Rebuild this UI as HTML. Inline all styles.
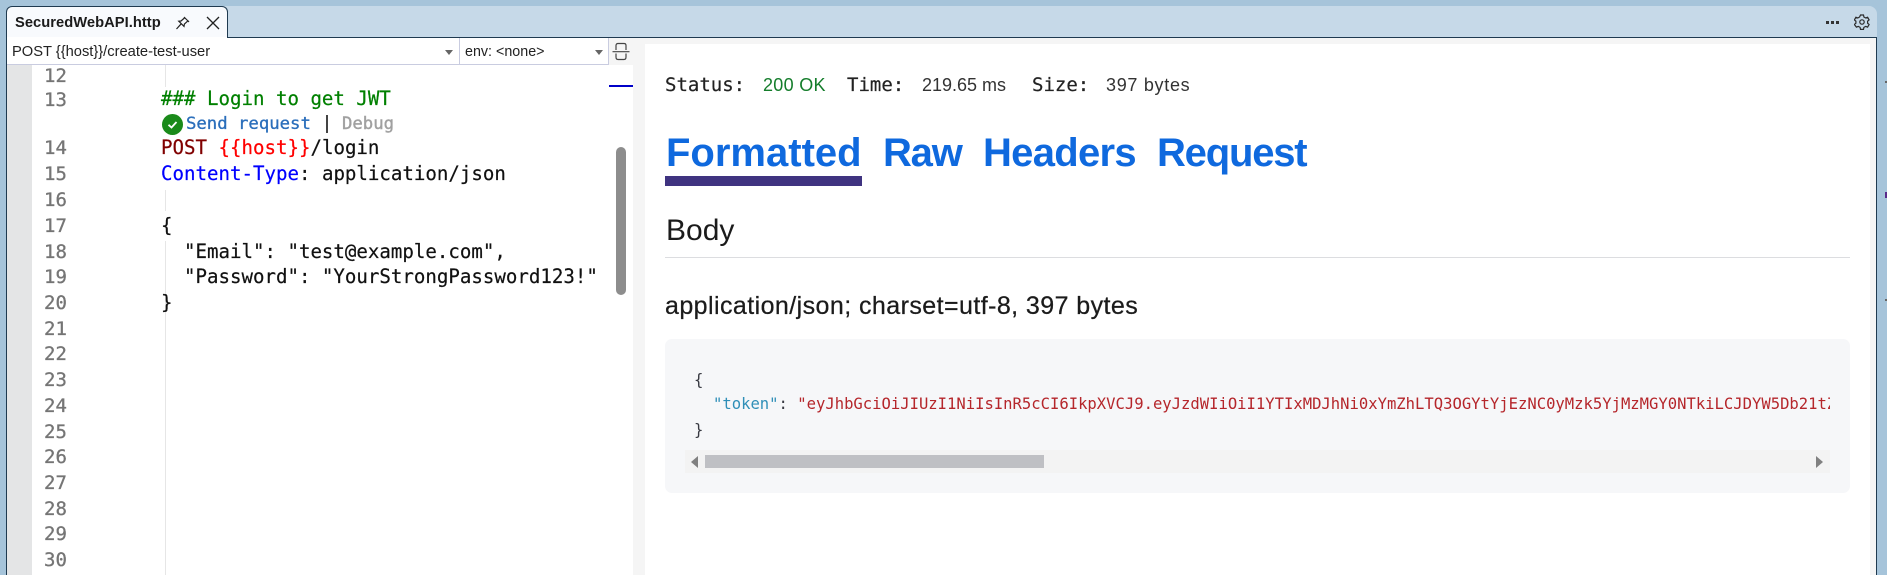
<!DOCTYPE html>
<html><head><meta charset="utf-8">
<style>
html,body{margin:0;padding:0;width:1887px;height:575px;overflow:hidden;background:#a6c4da}
*{box-sizing:border-box}
.a{position:absolute;white-space:pre}
.m{font-family:"DejaVu Sans Mono",monospace}
.s{font-family:"Liberation Sans",sans-serif}
.ln{position:absolute;left:44px;width:24px;font:19px/26px "DejaVu Sans Mono",monospace;color:#757575;-webkit-text-stroke:.3px #757575}
.cd{position:absolute;left:161px;font:19.100px/26px "DejaVu Sans Mono",monospace;color:#111;white-space:pre;-webkit-text-stroke:.2px currentColor}
.st{position:absolute;top:73px;font:19px/24px "DejaVu Sans Mono",monospace;color:#222;white-space:pre;-webkit-text-stroke:.2px #222}
.sv{position:absolute;top:73px;font:18px/24px "Liberation Sans",sans-serif;color:#333;white-space:pre}
.tb{position:absolute;top:129px;font:bold 40px/48px "Liberation Sans",sans-serif;color:#0f69de;white-space:pre}
.gd{position:absolute;left:165px;width:1px;background:#e6e6e6}
.jl{position:absolute;font:15.550px/25px "DejaVu Sans Mono",monospace;white-space:pre}
</style></head><body>
<!-- strip -->
<div class="a" style="left:6px;top:6px;width:1871px;height:32px;background:#c6d9e8;border-radius:8px 8px 0 0"></div>
<div class="a" style="left:6px;top:37px;width:1871px;height:538px;background:#f5f5f5;border-left:1px solid #1f3a50;border-right:1px solid #1f3a50;border-top:1px solid #1f3a50"></div>
<!-- tab -->
<div class="a" style="left:6px;top:6px;width:222px;height:33px;background:#f8fafd;border:1px solid #1f3a50;border-bottom:none;border-radius:6px 6px 0 0"></div>
<div class="a" style="left:7px;top:37px;width:220px;height:2px;background:#fff"></div>
<div class="a s" style="left:15px;top:13px;font-weight:bold;font-size:14.700px;letter-spacing:.04px;line-height:20px;color:#1b1b1b">SecuredWebAPI.http</div>
<svg class="a" style="left:174px;top:15px" width="18" height="16" viewBox="0 0 18 16" fill="none" stroke="#222" stroke-width="1.2"><path d="M10 2l5 5M11 2.500L7 6 4.800 6.200 10 11.400l.4-2.400 4-3.600M7.300 8.700L2.500 14"/></svg>
<svg class="a" style="left:206px;top:16px" width="14" height="14" viewBox="0 0 14 14" fill="none" stroke="#222" stroke-width="1.3"><path d="M1 1l12 12M13 1L1 13"/></svg>
<!-- top right -->
<div class="a" style="left:1826px;top:21px;width:3px;height:3px;background:#333"></div>
<div class="a" style="left:1831px;top:21px;width:3px;height:3px;background:#333"></div>
<div class="a" style="left:1836px;top:21px;width:3px;height:3px;background:#333"></div>
<svg class="a" style="left:1854px;top:14px" width="16" height="16" viewBox="0 0 16 16" fill="none" stroke="#2b2b2b" stroke-width="1.2"><path d="M6.500 1h3l.4 2 1.800 1 1.900-.7 1.500 2.600-1.500 1.300v2l1.500 1.300-1.500 2.600-1.900-.7-1.800 1-.4 2h-3l-.4-2-1.800-1-1.900.7L.4 10.500 1.900 9.200v-2L.4 5.900l1.500-2.600 1.900.7 1.800-1z"/><circle cx="8" cy="8" r="2.200"/></svg>
<!-- combos -->
<div class="a" style="left:7px;top:38px;width:453px;height:27px;background:#fff;border:1px solid #c9cce0;border-top:none;border-left:none"></div>
<div class="a" style="left:459px;top:38px;width:150px;height:27px;background:#fff;border:1px solid #c9cce0;border-top:none;border-left:1px solid #c9cce0"></div>
<div class="a s" style="left:12px;top:43px;font-size:14.700px;line-height:18px;color:#222">POST {{host}}/create-test-user</div>
<div class="a s" style="left:465px;top:43px;font-size:14.300px;line-height:18px;color:#222">env: &lt;none&gt;</div>
<div class="a" style="left:445px;top:50px;border:4px solid transparent;border-top:5px solid #666;border-bottom:none;width:0;height:0"></div>
<div class="a" style="left:595px;top:50px;border:4px solid transparent;border-top:5px solid #666;border-bottom:none;width:0;height:0"></div>
<svg class="a" style="left:612px;top:42px" width="18" height="19" viewBox="0 0 18 19" fill="none" stroke="#444" stroke-width="1.2"><path d="M4 8V3.500Q4 1.500 6 1.500H12Q14 1.500 14 3.500V8M4 11.500V15Q4 17.500 6 17.500H12Q14 17.500 14 15V11.500M.5 9.700H17.500"/></svg>
<!-- editor -->
<div class="a" style="left:7px;top:65px;width:25px;height:510px;background:#e4e5e6"></div>
<div class="a" style="left:32px;top:65px;width:601px;height:510px;background:#fff"></div>
<div class="gd" style="top:65px;height:22px"></div>
<div class="gd" style="top:190px;height:21px"></div>
<div class="gd" style="top:241px;height:78px"></div>
<div class="gd" style="top:319px;height:256px"></div>
<div class="ln" style="top:63px">12</div>
<div class="ln" style="top:87px">13</div>
<div class="ln" style="top:135px">14</div>
<div class="ln" style="top:161px">15</div>
<div class="ln" style="top:187px">16</div>
<div class="ln" style="top:213px">17</div>
<div class="ln" style="top:239px">18</div>
<div class="ln" style="top:264px">19</div>
<div class="ln" style="top:290px">20</div>
<div class="ln" style="top:316px">21</div>
<div class="ln" style="top:341px">22</div>
<div class="ln" style="top:367px">23</div>
<div class="ln" style="top:393px">24</div>
<div class="ln" style="top:419px">25</div>
<div class="ln" style="top:444px">26</div>
<div class="ln" style="top:470px">27</div>
<div class="ln" style="top:496px">28</div>
<div class="ln" style="top:521px">29</div>
<div class="ln" style="top:547px">30</div>
<div class="cd" style="top:86px;color:#008000">### Login to get JWT</div>
<svg class="a" style="left:162px;top:114px" width="21" height="21" viewBox="0 0 21 21"><circle cx="10.500" cy="10.500" r="10.500" fill="#1a8a1a"/><path d="M6.500 10.800l3 2.700 5-5.500" fill="none" stroke="#fff" stroke-width="1.800"/></svg>
<div class="a m" style="left:186px;top:112px;font-size:17.300px;line-height:24px;color:#2a6ebb;-webkit-text-stroke:.3px #2a6ebb">Send request</div>
<div class="a" style="left:326px;top:115px;width:2px;height:18px;background:#444"></div>
<div class="a m" style="left:342px;top:112px;font-size:17.300px;line-height:24px;color:#a0a0a0;-webkit-text-stroke:.4px #a0a0a0">Debug</div>
<div class="cd" style="top:135px"><span style="color:#800000">POST </span><span style="color:#f00">{{host}}</span>/login</div>
<div class="cd" style="top:161px"><span style="color:#00f">Content-Type</span>: application/json</div>
<div class="cd" style="top:213px">{</div>
<div class="cd" style="top:239px">  "Email": "test@example.com",</div>
<div class="cd" style="top:264px">  "Password": "YourStrongPassword123!"</div>
<div class="cd" style="top:290px">}</div>
<div class="a" style="left:609px;top:85px;width:24px;height:2px;background:#0000c8"></div>
<div class="a" style="left:616px;top:147px;width:10px;height:148px;background:#8d8d8d;border-radius:5px"></div>
<!-- response -->
<div class="a" style="left:645px;top:44px;width:1225px;height:531px;background:#fff"></div>
<div class="st" style="left:665px">Status:</div>
<div class="sv" style="left:763px;letter-spacing:.3px;color:#147d2b">200 OK</div>
<div class="st" style="left:847px">Time:</div>
<div class="sv" style="left:922px">219.65 ms</div>
<div class="st" style="left:1032px">Size:</div>
<div class="sv" style="left:1106px;letter-spacing:.7px">397 bytes</div>
<div class="tb" style="left:666px">Formatted</div>
<div class="tb" style="left:883px;letter-spacing:-1.200px">Raw</div>
<div class="tb" style="left:983px;letter-spacing:-.7px">Headers</div>
<div class="tb" style="left:1157px;letter-spacing:-1.200px">Request</div>
<div class="a" style="left:665px;top:176px;width:197px;height:10px;background:#3f3380"></div>
<div class="a s" style="left:666px;top:213px;font-size:30px;line-height:36px;color:#1b1b1b">Body</div>
<div class="a" style="left:665px;top:257px;width:1185px;height:1px;background:#dcdde0"></div>
<div class="a s" style="left:665px;top:291px;font-size:25px;letter-spacing:.43px;line-height:30px;color:#1b1b1b;-webkit-text-stroke:.25px #1b1b1b">application/json; charset=utf-8, 397 bytes</div>
<!-- code -->
<div class="a" style="left:665px;top:339px;width:1185px;height:154px;background:#f6f7f9;border-radius:7px"></div>
<div class="a" style="left:685px;top:368px;width:1145px;height:82px;overflow:hidden">
<div class="jl" style="left:9px;top:0px;color:#383a42">{</div>
<div class="jl" style="left:28px;top:24px;color:#383a42"><span style="color:#2f8fb8">"token"</span>: <span style="color:#b5262b">"eyJhbGciOiJIUzI1NiIsInR5cCI6IkpXVCJ9.eyJzdWIiOiI1YTIxMDJhNi0xYmZhLTQ3OGYtYjEzNC0yMzk5YjMzMGY0NTkiLCJDYW5Db21tZW50Ijoi</span></div>
<div class="jl" style="left:9px;top:50px;color:#383a42">}</div>
</div>
<div class="a" style="left:685px;top:450px;width:1145px;height:23px;background:#f3f3f3"></div>
<div class="a" style="left:691px;top:456px;border:6px solid transparent;border-right:7px solid #808080;border-left:none;width:0;height:0"></div>
<div class="a" style="left:1816px;top:456px;border:6px solid transparent;border-left:7px solid #808080;border-right:none;width:0;height:0"></div>
<div class="a" style="left:705px;top:455px;width:339px;height:13px;background:#bfc0c4"></div>
<!-- right edge specks -->
<div class="a" style="left:1885px;top:81px;width:2px;height:2px;background:#666"></div>
<div class="a" style="left:1885px;top:299px;width:2px;height:2px;background:#666"></div>
<div class="a" style="left:1885px;top:192px;width:2px;height:6px;background:#5a2a8a"></div>
</body></html>
